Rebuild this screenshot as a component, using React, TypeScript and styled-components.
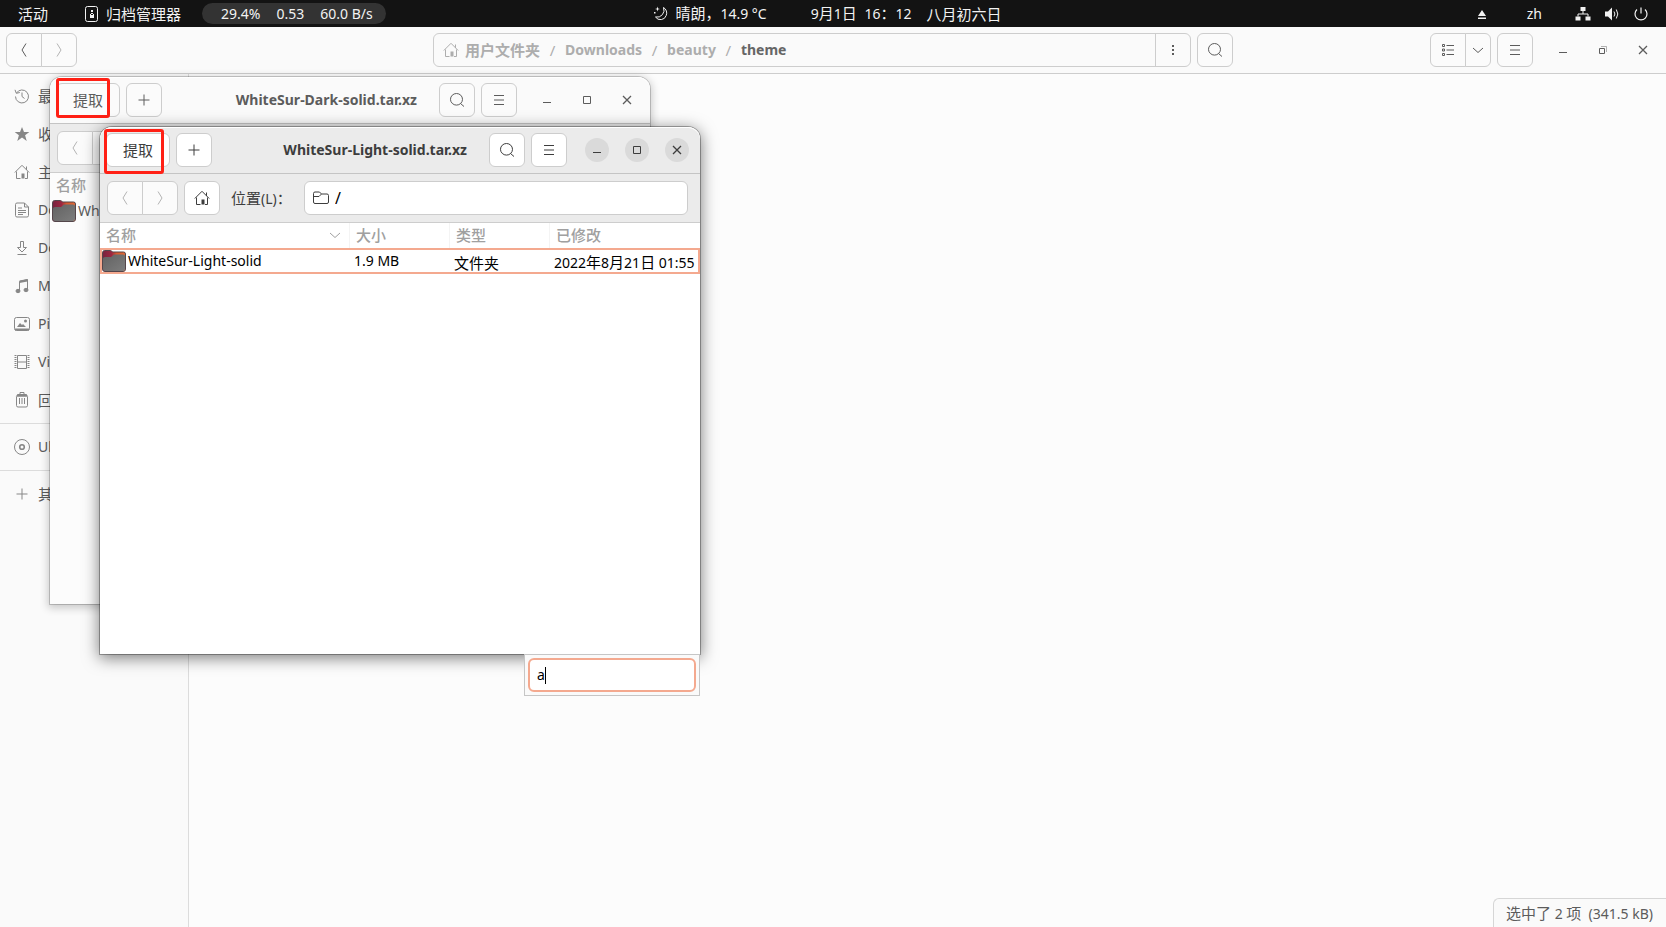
import React from "react";
import styled, { createGlobalStyle, css } from "styled-components";

const Global = createGlobalStyle`
  *, *::before, *::after { box-sizing: border-box; }
  html, body { margin: 0; padding: 0; }
  body, button, input, table {
    font-family: "Noto Sans", "Noto Sans CJK SC", sans-serif;
    font-size: 15px;
    line-height: 20px;
  }
  body { background: #fcfcfc; color: #5c5c5c; overflow: hidden; }
`;

/* ---------- shared parts ---------- */

const Latin = styled.span`
  font-size: 14px;
`;

const Button = styled.button<{ $wide?: boolean; $solid?: boolean; $faint?: boolean }>`
  display: flex;
  align-items: center;
  justify-content: center;
  flex: none;
  width: ${(p) => (p.$wide ? 64 : 36)}px;
  height: 34px;
  padding: 0;
  border: 1px solid #cdcdcd;
  border-radius: 6px;
  background: ${(p) => (p.$solid ? "#ffffff" : "#fbfbfb")};
  color: ${(p) => (p.$faint ? "#b4b4b4" : "inherit")};
`;

const ButtonGroup = styled.div`
  display: flex;
  flex: none;
  & > button + button {
    margin-left: -1px;
    border-top-left-radius: 0;
    border-bottom-left-radius: 0;
  }
  & > button:first-child {
    border-top-right-radius: 0;
    border-bottom-right-radius: 0;
  }
`;

const ArrowButton = styled(Button)`
  width: 26px;
`;

const WindowControls = styled.div`
  display: flex;
  gap: 16px;
  padding-left: 12px;
  padding-right: 5px;
`;

const ControlButton = styled.button<{ $active?: boolean }>`
  display: flex;
  align-items: center;
  justify-content: center;
  width: 24px;
  height: 24px;
  padding: 0;
  border: 0;
  border-radius: 12px;
  color: inherit;
  background: ${(p) => (p.$active ? "#dadada" : "transparent")};
`;

/* ---------- icons ---------- */

const Svg = styled.svg`
  display: block;
  flex: none;
  fill: none;
  stroke: currentColor;
`;

type IconName =
  | "archive" | "moon" | "eject" | "network" | "volume" | "power" | "back" | "forward"
  | "home" | "dots" | "search" | "list" | "down" | "menu" | "minimize" | "restore"
  | "maximize" | "close" | "recent" | "star" | "document" | "download" | "music"
  | "picture" | "video" | "trash" | "disc" | "plus" | "folder";

const shapes: Record<IconName, React.ReactNode> = {
  archive: (
    <>
      <rect x="1.500" y="0.500" width="12" height="15" rx="2" />
      <path d="M7 4h2v2H7zM6 8h1V7h2v1h1v4H6z" fill="currentColor" stroke="none" />
      <path d="M7 8h2v1H7z" fill="#131313" stroke="none" />
    </>
  ),
  moon: (
    <>
      <path d="M10.500 1.500a7 7 0 0 1-8 9.500a6 6 0 0 0 10.700-1.500a6.300 6.300 0 0 0-2.700-8z" />
      <path d="M4.500 0.500l.6 1.900 1.900.6-1.900.6-.6 1.900-.6-1.900L2 3l1.900-.6z" fill="currentColor" stroke="none" />
      <path d="M1 6h1.500v1.500H1z" fill="currentColor" stroke="none" />
    </>
  ),
  eject: <path d="M8 4l4 6H4zM4 11.500h8V13H4z" fill="currentColor" stroke="none" />,
  network: (
    <>
      <path d="M5.500 1h5v4h-5zM.5 10.500h5v4h-5zM10.500 10.500h5v4h-5z" fill="currentColor" stroke="none" />
      <path d="M8 5v3M3 10.500V8h10v2.500" />
    </>
  ),
  volume: (
    <>
      <path d="M1 5.500h3l4-4v13l-4-4H1z" fill="currentColor" stroke="none" />
      <path d="M10 5.500q1.800 2.500 0 5M12.300 3.500q3 4.500 0 9" />
    </>
  ),
  power: <path d="M8 1.500v6M4 3.500a6 6 0 1 0 8 0" strokeWidth="1.200" />,
  back: <path d="M10 1.500L6 8l4 6.500" />,
  forward: <path d="M6 1.500L10 8l-4 6.500" />,
  home: (
    <>
      <path d="M.8 8.500L8 1.300l7.200 7.200M2.500 7.500v7h4M13.500 7.500v7H11M12.500 2.500V6" />
      <path d="M7.500 9.500h3v5h-3z" fill="currentColor" stroke="none" />
    </>
  ),
  dots: <path d="M7 3h2v2H7zM7 7h2v2H7zM7 11h2v2H7z" fill="currentColor" stroke="none" />,
  search: <path d="M7.500 1.500a6 5.800 0 1 0 0 11.600a6 5.800 0 0 0 0-11.600zM11.500 11.500l3.500 3" />,
  list: (
    <>
      <path d="M2.500 2.500h2v2h-2zM2.500 7h2v2h-2zM2.500 11.500h2v2h-2z" />
      <path d="M6.500 3.500H14M6.500 8H14M6.500 12.500H14" />
    </>
  ),
  down: <path d="M3 6l5 4.500L13 6" />,
  menu: <path d="M3 3.500h10M3 8h10M3 12.500h10" />,
  minimize: <path d="M4 10.500h8" />,
  restore: (
    <>
      <path d="M4.500 6.500h5v5h-5z" />
      <path d="M6 4.500h5.500V10" opacity=".45" />
    </>
  ),
  maximize: <path d="M4.500 4.500h7v7h-7z" />,
  close: <path d="M4 4l8 8M12 4l-8 8" strokeWidth="1.300" />,
  recent: (
    <>
      <path d="M2.500 5a6.500 6.500 0 1 1-1 3.500M1 1.800L2.300 5.300 5.800 4.500" />
      <path d="M8 4.500v4l2.500 2" />
    </>
  ),
  star: <path d="M8 1l2 5h5.300l-4.200 3.200L12.700 15 8 11.600 3.300 15l1.600-5.800L.7 6H6z" fill="currentColor" stroke="none" />,
  document: <path d="M1.500 2.500q0-1.500 1.500-1.500h7.500l4 4v8.500q0 1.500-1.500 1.500H3q-1.500 0-1.500-1.500zM10.500 1v4h4M4 6h4M4 8.500h8M4 10.500h8M4 12.500h5" />,
  download: <path d="M6.500 1.500h3v6h3L8 12 3.500 7.500h3zM3.500 14.500h9" />,
  music: (
    <>
      <path d="M5.500 13V3.500l8-2V12" />
      <path d="M5.500 2.500l8-1.500v2.500l-8 1.500z" fill="currentColor" stroke="none" />
      <ellipse cx="4" cy="13" rx="2" ry="1.700" fill="currentColor" />
      <ellipse cx="12" cy="12" rx="2" ry="1.700" fill="currentColor" />
    </>
  ),
  picture: (
    <>
      <rect x=".5" y="1.500" width="15" height="13" rx="2" />
      <path d="M3 11l3-4 2 2 1-1 3 3zM1 12.500h14v2H1z" fill="currentColor" stroke="none" />
      <circle cx="11.500" cy="5" r="1.500" fill="currentColor" stroke="none" />
    </>
  ),
  video: (
    <>
      <path d="M3.500 1.500h9v13h-9zM3.500 8h9" />
      <path d="M1.500 1v14M14.500 1v14" strokeWidth="2" strokeDasharray="1 1" />
    </>
  ),
  trash: (
    <>
      <path d="M3.500 2h9l1.800 2.700H1.700z" fill="currentColor" stroke="none" />
      <path d="M6 2.500V.5h4v2M2.500 5v8.500q0 1.500 1.500 1.500h8q1.500 0 1.500-1.500V5M5.500 6v6M8 6v6M10.500 6v6" />
    </>
  ),
  disc: (
    <>
      <circle cx="8" cy="8" r="7.500" />
      <circle cx="8" cy="8" r="2.300" strokeWidth="1.600" />
    </>
  ),
  plus: <path d="M2.500 8h11M8 2.500v11" />,
  folder: <path d="M.5 3.500q0-1.500 1.500-1.500h4.500l2 2h5.500q1.500 0 1.500 1.500V12q0 1.500-1.500 1.500H2Q.5 13.500.5 12zM.5 6.500h5.500l2.500-2.500" />,
};

const Icon = ({ name, size = 16 }: { name: IconName; size?: number }) => (
  <Svg width={size} height={size} viewBox="0 0 16 16" aria-hidden="true">
    {shapes[name]}
  </Svg>
);

const FolderPicture = ({ id }: { id: string }) => (
  <Svg width="24" height="24" viewBox="0 0 24 24" aria-hidden="true">
    <defs>
      <linearGradient id={`${id}-tab`} x1="0" x2="1">
        <stop offset="0" stopColor="#76223f" />
        <stop offset=".4" stopColor="#9c2740" />
        <stop offset=".6" stopColor="#d9582f" />
        <stop offset="1" stopColor="#e06a35" />
      </linearGradient>
      <linearGradient id={`${id}-front`} x1="0" y1="0" x2="1" y2="1">
        <stop offset="0" stopColor="#626262" />
        <stop offset="1" stopColor="#7d7d7d" />
      </linearGradient>
    </defs>
    <path d="M.5 4q0-2.500 2-2.500h6q1 0 2 1.500h11q2 0 2 2V20q0 2.500-2.500 2.500H3Q.5 22.500.5 20z" fill={`url(#${id}-tab)`} stroke="#54464b" />
    <path d="M1 9.500Q1 8 3 8h6l3-2.500H21q2 0 2 1.500v13q0 2-2 2H3q-2 0-2-2z" fill={`url(#${id}-front)`} stroke="none" />
  </Svg>
);

/* ---------- top bar ---------- */

const Desktop = styled.div`
  display: flex;
  flex-direction: column;
  min-height: 100vh;
`;

const TopBar = styled.header`
  display: grid;
  grid-template-columns: 1fr auto 1fr;
  align-items: center;
  height: 27px;
  padding: 0 17px 0 18px;
  background: #131313;
  color: #f2f2f2;
`;

const TopLeft = styled.div`
  display: flex;
  align-items: center;
`;

const TopCenter = styled(TopLeft)`
  gap: 15px;
  padding-right: 12px;
`;

const TopRight = styled(TopLeft)`
  justify-content: flex-end;
  gap: 13px;
`;

const TopButton = styled.button<{ $after?: number }>`
  display: flex;
  align-items: center;
  gap: 6px;
  margin: 0 ${(p) => p.$after ?? 0}px 0 0;
  padding: 0;
  border: 0;
  background: none;
  color: inherit;
  white-space: pre;
`;

const Meter = styled.div`
  display: flex;
  gap: 16px;
  height: 21px;
  padding: 0 13px 0 19px;
  border-radius: 11px;
  background: #333333;
  font-size: 14px;
  line-height: 21px;
`;

/* ---------- file manager ---------- */

const Toolbar = styled.div`
  display: flex;
  align-items: center;
  gap: 6px;
  height: 47px;
  padding: 0 6px;
  border-bottom: 1px solid #cdcdcd;
  background: #fafafa;
`;

const Side = styled.div<{ $end?: boolean }>`
  display: flex;
  flex: 1;
  align-items: center;
  gap: 6px;
  justify-content: ${(p) => (p.$end ? "flex-end" : "flex-start")};
`;

const PathBar = styled.nav`
  display: flex;
  align-items: center;
  flex: none;
  width: calc(46% - 3px);
  height: 34px;
  border: 1px solid #cdcdcd;
  border-radius: 6px;
  padding-left: 9px;
  color: #adadad;
  font-weight: 700;
`;

const PathLink = styled.a<{ $current?: boolean }>`
  display: flex;
  align-items: center;
  gap: 6px;
  color: ${(p) => (p.$current ? "#666666" : "inherit")};
  text-decoration: none;
`;

const Slash = styled.span`
  width: 25px;
  text-align: center;
  font-weight: 400;
`;

const PathMenu = styled.button`
  display: flex;
  align-items: center;
  justify-content: center;
  width: 35px;
  height: 32px;
  margin-left: auto;
  padding: 0;
  border: 0;
  border-left: 1px solid #cdcdcd;
  background: none;
  color: #5c5c5c;
`;

const Body = styled.div`
  display: flex;
  flex: 1;
`;

const Sidebar = styled.aside`
  width: 189px;
  padding-top: 3px;
  border-right: 1px solid #dcdcdc;
  background: #fafafa;
`;

const Places = styled.ul`
  margin: 0;
  padding: 0;
  list-style: none;
  & + & {
    margin-top: 4px;
    padding-top: 4px;
    border-top: 1px solid #dcdcdc;
  }
`;

const Place = styled.a`
  display: flex;
  align-items: center;
  gap: 8px;
  height: 38px;
  padding-left: 14px;
  color: #5c5c5c;
  text-decoration: none;
  & > svg { color: #878787; }
`;

const Files = styled.main`
  display: flex;
  flex: 1;
  align-items: flex-end;
  justify-content: flex-end;
`;

const Status = styled.div`
  height: 29px;
  padding: 4px 13px 0 12px;
  border: 1px solid #d6d6d6;
  border-right: 0;
  border-bottom: 0;
  border-top-left-radius: 6px;
  background: #fafafa;
  white-space: pre;
`;

/* ---------- archive manager windows ---------- */

const Window = styled.section<{ $active?: boolean }>`
  position: absolute;
  left: ${(p) => (p.$active ? 100 : 50)}px;
  top: ${(p) => (p.$active ? 127 : 77)}px;
  display: flex;
  flex-direction: column;
  width: 600px;
  height: 527px;
  border-radius: 12px 12px 0 0;
  background: ${(p) => (p.$active ? "#ffffff" : "#fcfcfc")};
  color: ${(p) => (p.$active ? "#3d3d3d" : "#5c5c5c")};
  ${(p) =>
    p.$active
      ? css`box-shadow: 0 3px 16px 1px rgba(0, 0, 0, 0.5), 0 0 0 1px rgba(0, 0, 0, 0.3);`
      : css`box-shadow: 0 2px 8px 2px rgba(0, 0, 0, 0.2), 0 0 0 1px rgba(0, 0, 0, 0.18);`}
`;

const TitleBar = styled.div<{ $active?: boolean }>`
  display: flex;
  align-items: center;
  gap: 6px;
  height: 47px;
  padding: 0 6px;
  border-bottom: 1px solid #c4c4c4;
  border-radius: 12px 12px 0 0;
  background: ${(p) => (p.$active ? "#ebebeb" : "#fafafa")};
  box-shadow: inset 0 1px #ffffff;
`;

const Title = styled.h1`
  flex: 1;
  margin: 0;
  padding-right: 16px;
  text-align: right;
  font-size: 14px;
  font-weight: 700;
  line-height: 20px;
`;

const LocationBar = styled.div`
  display: flex;
  align-items: center;
  gap: 6px;
  height: 49px;
  padding: 0 12px 0 7px;
  border-bottom: 1px solid #cdcdcd;
  background: #ebebeb;
`;

const LocationLabel = styled.label`
  width: 67px;
  margin-left: 5px;
  white-space: nowrap;
`;

const LocationBox = styled.div`
  display: flex;
  flex: 1;
  align-items: center;
  gap: 6px;
  height: 34px;
  padding-left: 8px;
  border: 1px solid #cdcdcd;
  border-radius: 6px;
  background: #ffffff;
`;

const PlainInput = styled.input`
  flex: 1;
  min-width: 0;
  padding: 0;
  border: 0;
  outline: 0;
  background: none;
  color: #000000;
  font-size: 16px;
`;

const Table = styled.table`
  width: 100%;
  border-collapse: separate;
  border-spacing: 0;
  table-layout: fixed;
`;

const Head = styled.th<{ $width?: number }>`
  width: ${(p) => (p.$width ? `${p.$width}px` : "auto")};
  height: 25px;
  padding: 0 6px 2px;
  border-right: 1px solid #f4f4f4;
  color: #a0a0a0;
  font-weight: 500;
  text-align: left;
  &:last-child { border-right: 0; }
`;

const HeadLabel = styled.span`
  display: flex;
  align-items: center;
  justify-content: space-between;
`;

const Cell = styled.td<{ $active?: boolean; $low?: boolean }>`
  height: 26px;
  padding: ${(p) => (p.$low ? "3px 0 0 4px" : "0 0 2px 4px")};
  color: ${(p) => (p.$active ? "#000000" : "#5c5c5c")};
  white-space: nowrap;
  border: 0 solid ${(p) => (p.$active ? "#f4a98f" : "transparent")};
  border-width: 2px 0;
  line-height: 18px;
  &:first-child { border-left-width: 2px; padding: 0; }
  &:last-child { border-right-width: 2px; }
`;

const FileName = styled.span`
  display: flex;
  align-items: center;
  gap: 2px;
  height: 22px;
  font-size: 14px;
`;

const Mark = styled.div<{ $front?: boolean }>`
  position: absolute;
  left: ${(p) => (p.$front ? 4 : 6)}px;
  top: ${(p) => (p.$front ? 2 : 1)}px;
  width: ${(p) => (p.$front ? 60 : 54)}px;
  height: ${(p) => (p.$front ? 45 : 40)}px;
  border: 3px solid #ff2015;
  border-radius: 3px;
`;

const SearchPopup = styled.div`
  position: absolute;
  right: 0;
  top: 100%;
  width: 176px;
  padding: 3px;
  border: 1px solid #c6c6c6;
  background: #fafafa;
`;

const SearchBox = styled.div`
  position: relative;
  display: flex;
  align-items: center;
  height: 34px;
  padding-left: 7px;
  border: 2px solid #f4a98f;
  border-radius: 6px;
  background: #ffffff;
`;

const SearchInput = styled(PlainInput)`
  font-size: 14px;
`;

const Caret = styled.i`
  position: absolute;
  left: 15px;
  top: 7px;
  width: 1px;
  height: 17px;
  background: #000000;
`;

type ArchiveProps = { name: string; active?: boolean };

const ArchiveWindow = ({ name, active }: ArchiveProps) => (
  <Window $active={active} aria-label={name}>
    <TitleBar $active={active}>
      <Button $wide $solid={active}>提取</Button>
      <Button $solid={active} aria-label="添加"><Icon name="plus" /></Button>
      <Title>{name}.tar.xz</Title>
      <Button $solid={active} aria-label="搜索"><Icon name="search" /></Button>
      <Button $solid={active} aria-label="菜单"><Icon name="menu" /></Button>
      <WindowControls>
        <ControlButton $active={active} aria-label="最小化"><Icon name="minimize" /></ControlButton>
        <ControlButton $active={active} aria-label="最大化"><Icon name="maximize" /></ControlButton>
        <ControlButton $active={active} aria-label="关闭"><Icon name="close" /></ControlButton>
      </WindowControls>
    </TitleBar>
    <LocationBar>
      <ButtonGroup>
        <Button $faint aria-label="后退"><Icon name="back" /></Button>
        <Button $faint aria-label="前进"><Icon name="forward" /></Button>
      </ButtonGroup>
      <Button $solid={active} aria-label="主目录"><Icon name="home" /></Button>
      <LocationLabel htmlFor={`${name}-location`}>位置<Latin>(L)</Latin>：</LocationLabel>
      <LocationBox>
        <Icon name="folder" />
        <PlainInput id={`${name}-location`} defaultValue="/" />
      </LocationBox>
    </LocationBar>
    <Table>
      <thead>
        <tr>
          <Head $width={250}><HeadLabel>名称{active && <Icon name="down" />}</HeadLabel></Head>
          <Head $width={100}>大小</Head>
          <Head $width={100}>类型</Head>
          <Head>已修改</Head>
        </tr>
      </thead>
      <tbody>
        <tr>
          <Cell $active={active}><FileName><FolderPicture id={name} />{name}</FileName></Cell>
          <Cell $active={active}><Latin>1.9 MB</Latin></Cell>
          <Cell $active={active} $low>文件夹</Cell>
          <Cell $active={active} $low>
            <Latin>2022</Latin>年<Latin>8</Latin>月<Latin>21</Latin>日<Latin> 01:55</Latin>
          </Cell>
        </tr>
      </tbody>
    </Table>
    <Mark $front={active} />
    {active && (
      <SearchPopup>
        <SearchBox>
          <SearchInput aria-label="查找" defaultValue="a" />
          <Caret />
        </SearchBox>
      </SearchPopup>
    )}
  </Window>
);

const places: { icon: IconName; label: string; latin?: boolean }[][] = [
  [
    { icon: "recent", label: "最近使用" },
    { icon: "star", label: "收藏" },
    { icon: "home", label: "主目录" },
    { icon: "document", label: "Documents", latin: true },
    { icon: "download", label: "Downloads", latin: true },
    { icon: "music", label: "Music", latin: true },
    { icon: "picture", label: "Pictures", latin: true },
    { icon: "video", label: "Videos", latin: true },
    { icon: "trash", label: "回收站" },
  ],
  [{ icon: "disc", label: "Ubuntu", latin: true }],
  [{ icon: "plus", label: "其他位置" }],
];

export default function App() {
  return (
    <>
      <Global />
      <Desktop>
        <TopBar>
          <TopLeft>
            <TopButton $after={36}>活动</TopButton>
            <TopButton $after={21}><Icon name="archive" />归档管理器</TopButton>
            <Meter><span>29.4%</span><span>0.53</span><span>60.0 B/s</span></Meter>
          </TopLeft>
          <TopCenter>
            <TopButton $after={29}><Icon name="moon" /><span>晴朗，<Latin>14.9 °C</Latin></span></TopButton>
            <TopButton><span><Latin>9</Latin>月<Latin>1</Latin>日  <Latin>16</Latin>：<Latin>12</Latin></span></TopButton>
            <span>八月初六日</span>
          </TopCenter>
          <TopRight>
            <TopButton $after={24} aria-label="弹出"><Icon name="eject" /></TopButton>
            <TopButton $after={20}><Latin>zh</Latin></TopButton>
            <Icon name="network" />
            <Icon name="volume" />
            <Icon name="power" />
          </TopRight>
        </TopBar>

        <Toolbar>
          <Side>
            <ButtonGroup>
              <Button aria-label="后退"><Icon name="back" /></Button>
              <Button $faint aria-label="前进"><Icon name="forward" /></Button>
            </ButtonGroup>
          </Side>
          <PathBar>
            <PathLink href="#home"><Icon name="home" />用户文件夹</PathLink>
            <Slash>/</Slash>
            <PathLink href="#downloads"><Latin>Downloads</Latin></PathLink>
            <Slash>/</Slash>
            <PathLink href="#beauty"><Latin>beauty</Latin></PathLink>
            <Slash>/</Slash>
            <PathLink href="#theme" $current><Latin>theme</Latin></PathLink>
            <PathMenu aria-label="更多"><Icon name="dots" /></PathMenu>
          </PathBar>
          <Button aria-label="搜索"><Icon name="search" /></Button>
          <Side $end>
            <ButtonGroup>
              <Button aria-label="列表视图"><Icon name="list" /></Button>
              <ArrowButton aria-label="视图选项"><Icon name="down" /></ArrowButton>
            </ButtonGroup>
            <Button aria-label="菜单"><Icon name="menu" /></Button>
            <WindowControls>
              <ControlButton aria-label="最小化"><Icon name="minimize" /></ControlButton>
              <ControlButton aria-label="还原"><Icon name="restore" /></ControlButton>
              <ControlButton aria-label="关闭"><Icon name="close" /></ControlButton>
            </WindowControls>
          </Side>
        </Toolbar>

        <Body>
          <Sidebar>
            {places.map((group, i) => (
              <Places key={i}>
                {group.map((p) => (
                  <li key={p.label}>
                    <Place href={`#${p.icon}`}>
                      <Icon name={p.icon} />
                      {p.latin ? <Latin>{p.label}</Latin> : p.label}
                    </Place>
                  </li>
                ))}
              </Places>
            ))}
          </Sidebar>
          <Files>
            <Status>选中了<Latin> 2 </Latin>项<Latin>  (341.5 kB)</Latin></Status>
          </Files>
        </Body>
      </Desktop>

      <ArchiveWindow name="WhiteSur-Dark-solid" />
      <ArchiveWindow name="WhiteSur-Light-solid" active />
    </>
  );
}
